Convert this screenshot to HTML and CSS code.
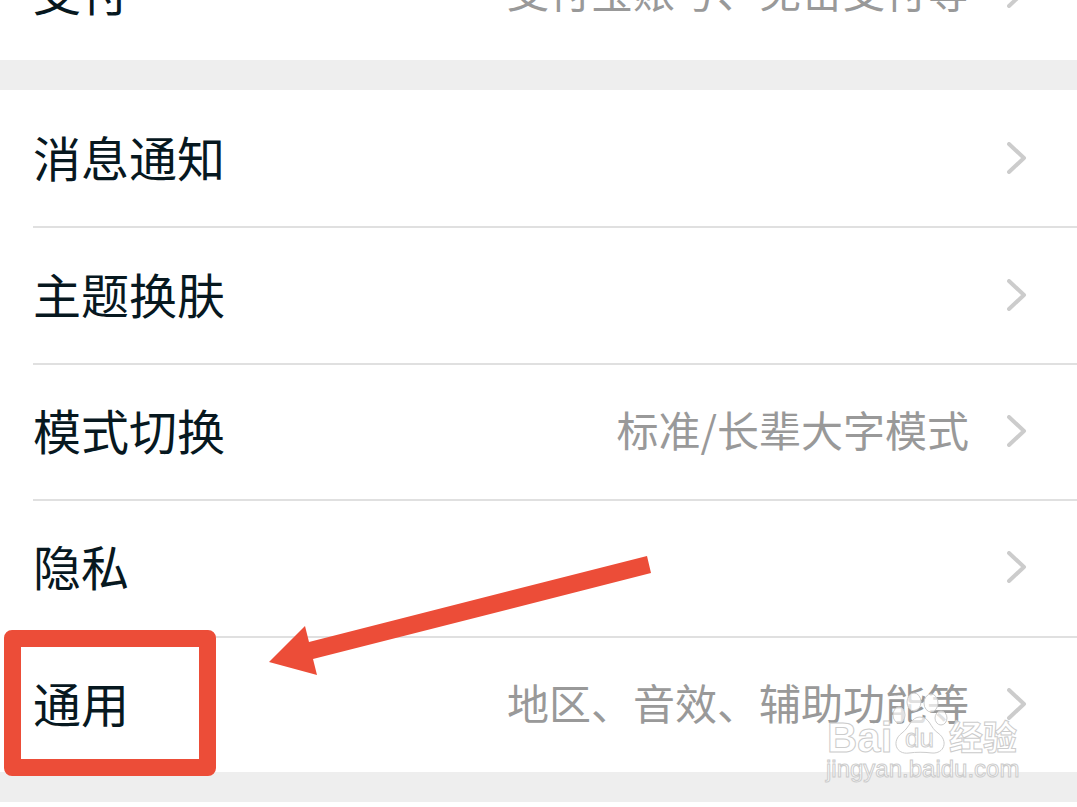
FILE: index.html
```html
<!DOCTYPE html>
<html lang="zh-CN">
<head>
  <meta charset="UTF-8">
  <meta name="viewport" content="width=device-width, initial-scale=1.0">
  <title>设置</title>
  <link rel="stylesheet" href="styles.css">
</head>
<body>
  <main class="settings">
    <nav class="group group-pay">
      <a class="item" href="#pay">
        <span class="name">支付</span>
        <span class="value">支付宝账号、免密支付等</span>
        <svg class="arrow" viewBox="0 0 20 32"><path d="M2 2l15 14L2 30"/></svg>
      </a>
    </nav>

    <nav class="group group-common">
      <a class="item" href="#notice">
        <span class="name">消息通知</span>
        <svg class="arrow" viewBox="0 0 20 32"><path d="M2 2l15 14L2 30"/></svg>
      </a>
      <a class="item" href="#theme">
        <span class="name">主题换肤</span>
        <svg class="arrow" viewBox="0 0 20 32"><path d="M2 2l15 14L2 30"/></svg>
      </a>
      <a class="item" href="#mode">
        <span class="name">模式切换</span>
        <span class="value">标准/长辈大字模式</span>
        <svg class="arrow" viewBox="0 0 20 32"><path d="M2 2l15 14L2 30"/></svg>
      </a>
      <a class="item" href="#privacy">
        <span class="name">隐私</span>
        <svg class="arrow" viewBox="0 0 20 32"><path d="M2 2l15 14L2 30"/></svg>
      </a>
      <a class="item" href="#general">
        <span class="name">通用</span>
        <span class="value">地区、音效、辅助功能等</span>
        <svg class="arrow" viewBox="0 0 20 32"><path d="M2 2l15 14L2 30"/></svg>
      </a>

      <!-- 标注 -->
      <span class="mark-box"></span>
      <svg class="mark-arrow" viewBox="0 0 384 122">
        <path d="M1 107L37 71L41 87L379 1L383 18L45 104L49 120Z"/>
      </svg>

      <!-- 水印 -->
      <svg class="watermark" viewBox="0 0 200 94">
        <ellipse cx="76" cy="23" rx="6" ry="8"/>
        <ellipse cx="91" cy="10" rx="7" ry="9"/>
        <ellipse cx="108" cy="11" rx="7" ry="9"/>
        <ellipse cx="118" cy="26" rx="6" ry="7"/>
        <path d="M97 25C107 25 107 36 115 41C126 49 121 62 109 61C101 60 93 60 86 61C73 63 68 49 79 41C87 35 88 25 97 25Z"/>
        <text class="wm-logo" x="4" y="60">Bai</text>
        <text class="wm-du" x="82" y="55">du</text>
        <text class="wm-cn" x="126" y="58">经验</text>
        <text class="wm-url" x="3" y="85">jingyan.baidu.com</text>
      </svg>
    </nav>
  </main>
</body>
</html>
```
FILE: styles.css
```css
* {
  box-sizing: border-box;
}
body {
  margin: 0;
  background: #fff;
  font-family: "Noto Sans CJK SC", "Noto Sans", sans-serif;
}
.settings {
  overflow: hidden;
}
.group {
  position: relative;
  display: grid;
  grid-auto-rows: 1fr;
  padding-left: 33px;
  border-bottom: 30px solid #eee;
  background: #fff;
}
/* 第一组向上滚出一部分 */
.group-pay {
  margin-top: -76px;
  min-height: 166px;
}
.group-common {
  min-height: 712px;
}

.item {
  display: flex;
  align-items: center;
  padding-right: 50px;
  color: #07181f;
  text-decoration: none;
}
.item + .item {
  padding-bottom: 2px;
  border-top: 2px solid #e0e0e0;
}
.item .name,
.item .value {
  padding-bottom: 4px;
  line-height: 64px;
}
.item .name {
  flex: 1;
  font-size: 48px;
}
.item .value {
  color: #999;
  font-size: 42px;
}
.item .arrow {
  width: 20px;
  height: 32px;
  margin-left: 38px;
  fill: none;
  stroke: #ccc;
  stroke-width: 4;
  stroke-linecap: round;
  stroke-linejoin: round;
}

.mark-box {
  position: absolute;
  left: 4px;
  bottom: -4px;
  width: 212px;
  height: 146px;
  border: 17px solid #ec4d38;
  border-radius: 8px;
}
.mark-arrow {
  position: absolute;
  left: 268px;
  bottom: 95px;
  width: 384px;
  height: 122px;
  fill: #ec4d38;
}

.watermark {
  position: absolute;
  right: 54px;
  bottom: -14px;
  width: 200px;
  height: 94px;
  fill: #fff;
  fill-opacity: .7;
  stroke: #ccc;
  stroke-width: 1;
}
.watermark text {
  font-family: "Liberation Sans", "Noto Sans CJK SC", sans-serif;
}
.wm-logo {
  font-size: 42px;
  font-weight: bold;
}
.wm-du {
  font-size: 26px;
}
.wm-cn {
  font-size: 34px;
  font-weight: bold;
}
.wm-url {
  font-size: 24px;
}
```
